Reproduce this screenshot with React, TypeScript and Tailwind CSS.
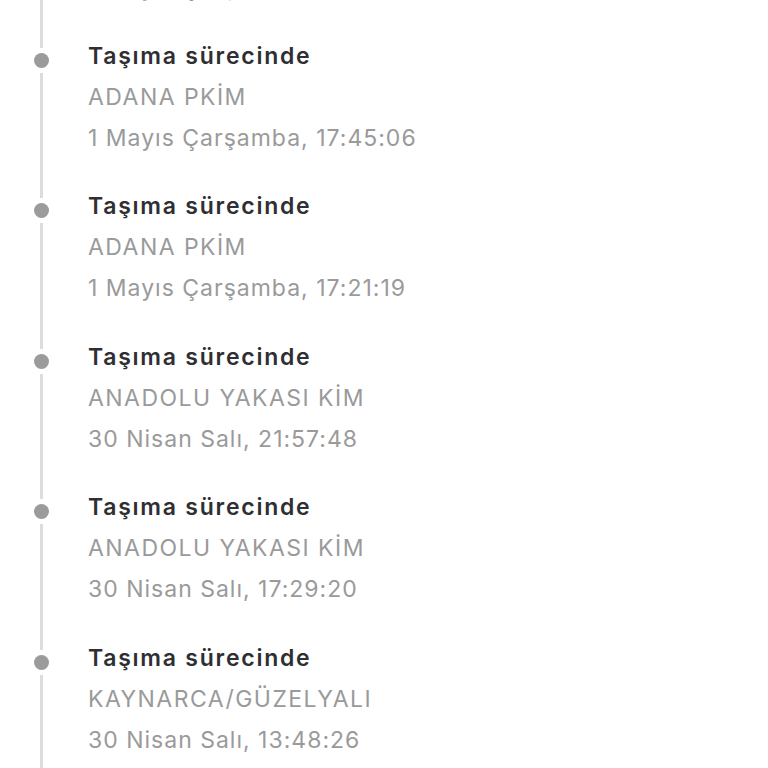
import React from "react";

type Event = { status: string; place: string; time: string };

const EVENTS: Event[] = [
  { status: "Taşıma sürecinde", place: "ADANA PKİM", time: "1 Mayıs Çarşamba, 18:02:11" },
  { status: "Taşıma sürecinde", place: "ADANA PKİM", time: "1 Mayıs Çarşamba, 17:45:06" },
  { status: "Taşıma sürecinde", place: "ADANA PKİM", time: "1 Mayıs Çarşamba, 17:21:19" },
  { status: "Taşıma sürecinde", place: "ANADOLU YAKASI KİM", time: "30 Nisan Salı, 21:57:48" },
  { status: "Taşıma sürecinde", place: "ANADOLU YAKASI KİM", time: "30 Nisan Salı, 17:29:20" },
  { status: "Taşıma sürecinde", place: "KAYNARCA/GÜZELYALI", time: "30 Nisan Salı, 13:48:26" },
];

function TimelineItem({ ev }: { ev: Event }) {
  return (
    <li className="flex h-[150.4px]">
      <div className="flex w-[16px] flex-col items-center">
        <div className="h-[12px] w-[3px] bg-[#dcdcdc]" />
        <div className="mt-[5px] h-[15px] w-[15px] rounded-full bg-[#9b9b9b]" />
        <div className="mt-[5px] w-[3px] flex-1 bg-[#dcdcdc]" />
      </div>
      <div className="ml-[39px] flex flex-col">
        <p className="text-[23px] font-semibold leading-[41px] tracking-[1.75px] text-[#2f2f33]">{ev.status}</p>
        <p className="text-[23px] leading-[41px] tracking-[1.45px] text-[#9a9a9a]">{ev.place}</p>
        <p className="text-[23px] leading-[41px] tracking-[1px] text-[#9a9a9a]">{ev.time}</p>
      </div>
    </li>
  );
}

export default function App() {
  return (
    <div className="h-screen overflow-hidden bg-white font-['Inter',sans-serif]">
      <ul className="mt-[-114.4px] pl-[33px]">
        {EVENTS.map((ev, i) => (
          <TimelineItem key={i} ev={ev} />
        ))}
      </ul>
    </div>
  );
}
